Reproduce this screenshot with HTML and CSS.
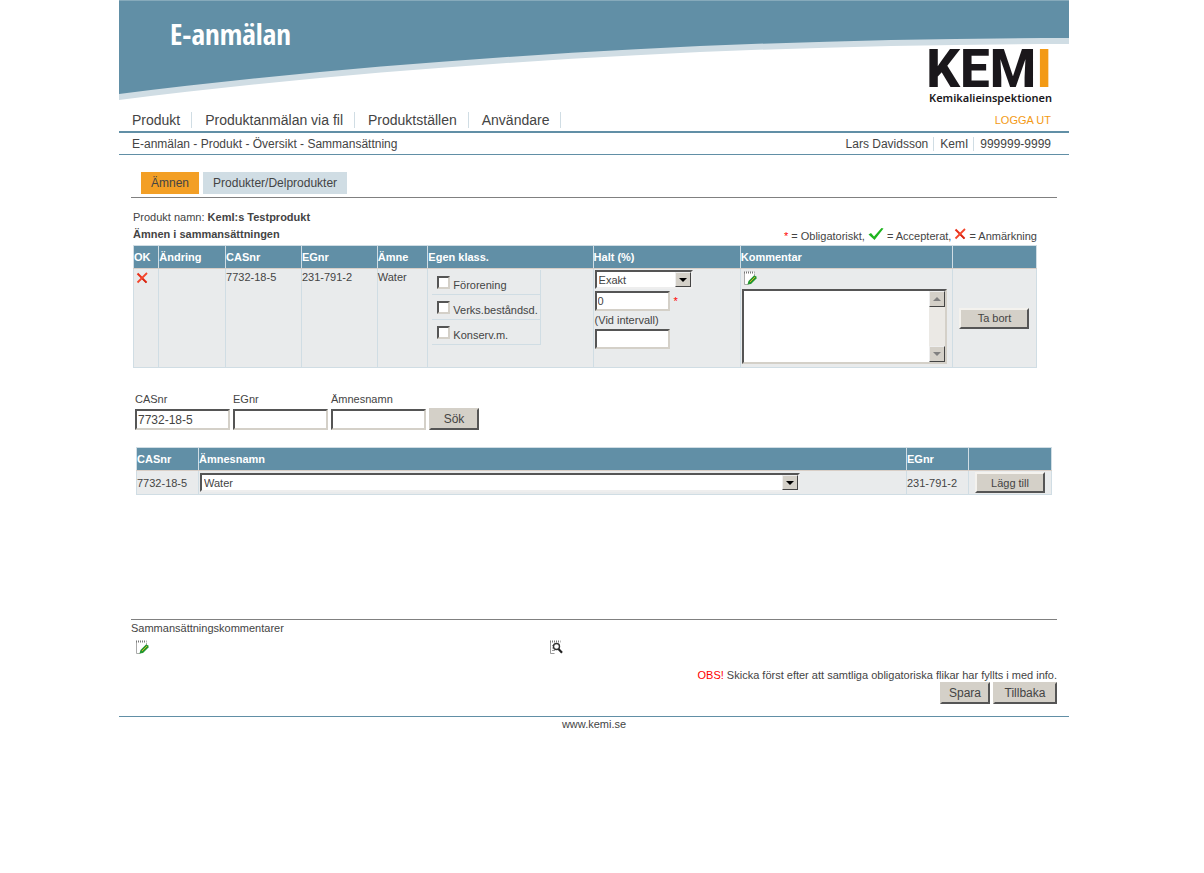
FILE: index.html
```html
<!DOCTYPE html>
<html lang="sv">
<head>
<meta charset="utf-8">
<title>E-anmälan</title>
<link rel="stylesheet" href="styles.css">
</head>
<body>
<svg class="defs" aria-hidden="true">
  <symbol id="cross" viewBox="0 0 12 12">
    <path d="M1.500 1.500 10.500 10.500" stroke="#e8301a" stroke-width="2"/>
    <path d="M11 1 1.500 10.500" stroke="#f4452a" stroke-width="1.800"/>
    <path d="M6.500 7 10.500 11" stroke="#c8200c" stroke-width="1"/>
  </symbol>
  <symbol id="note" viewBox="0 0 14 14">
    <path d="M1 1h10v7l-4 5H1Z" fill="#fff"/>
    <path d="M1.500 2v11.500h4M11.500 3v2" fill="none" stroke="#aaa"/>
    <path d="M1 1.500h10.500" stroke="#777" stroke-width="2" stroke-dasharray="1 1"/>
    <path d="M4.500 13.500 5.500 10 11 4.500 13.500 5.500 13.500 7.500 8 13Z" fill="#23972f"/>
    <path d="M7 11 12 6" stroke="#d9b41f" stroke-width="1"/>
  </symbol>
</svg>
<div class="page">
  <header class="banner">
    <svg class="wave" viewBox="0 0 950 105" preserveAspectRatio="none" aria-hidden="true">
      <path d="M0 0H950V44C640 44 300 62 0 100Z" fill="#d0dde4"/>
      <path d="M0 0H950V38C640 38 300 56 0 94Z" fill="#618fa6"/>
      <path d="M0 .5H950" stroke="#86aabb"/>
    </svg>
    <h1 class="title">E-anmälan</h1>
    <div class="logo"><span class="logo-mark">KEM<b>I</b></span><span class="logo-sub">Kemikalieinspektionen</span></div>
  </header>
  <nav class="nav">
    <a href="#">Produkt</a><a href="#">Produktanmälan via fil</a><a href="#">Produktställen</a><a href="#">Användare</a>
    <a class="logout" href="#">LOGGA UT</a>
  </nav>
  <div class="crumbs">
    <span class="path">E-anmälan - Produkt - Översikt - Sammansättning</span>
    <span>Lars Davidsson</span><span>KemI</span><span>999999-9999</span>
  </div>
  <main>
    <div class="tabs"><a class="tab active" href="#">Ämnen</a><a class="tab" href="#">Produkter/Delprodukter</a></div>
    <section class="substances">
      <p class="product">Produkt namn: <b>KemI:s Testprodukt</b></p>
      <div class="heading">
        <h2>Ämnen i sammansättningen</h2>
        <p class="legend"><span class="red">*</span> = Obligatoriskt,
          <svg class="mark" width="16" height="14" viewBox="0 0 16 14"><path d="M.5 7.500 3 6 6 9.500 13.500 1 15.500 1.500 6.500 13Z" fill="#1fb51f"/></svg> = Accepterat,
          <svg class="mark" width="12" height="12"><use href="#cross"/></svg> = Anmärkning</p>
      </div>
      <table class="grid main-grid">
        <colgroup><col class="c-ok"><col class="c-change"><col class="c-nr"><col class="c-nr"><col class="c-name"><col class="c-class"><col class="c-conc"><col class="c-comment"><col></colgroup>
        <thead><tr><th>OK</th><th>Ändring</th><th>CASnr</th><th>EGnr</th><th>Ämne</th><th>Egen klass.</th><th>Halt (%)</th><th>Kommentar</th><th></th></tr></thead>
        <tbody><tr>
          <td><svg class="status" width="12" height="12"><use href="#cross"/></svg></td>
          <td></td><td>7732-18-5</td><td>231-791-2</td><td>Water</td>
          <td><div class="checks">
            <label><input type="checkbox">Förorening</label>
            <label><input type="checkbox">Verks.beståndsd.</label>
            <label><input type="checkbox">Konserv.m.</label>
          </div></td>
          <td><div class="conc">
            <div class="select short"><select aria-label="Halt"><option>Exakt</option></select><span class="arrow"></span></div>
            <div class="value"><input class="field" type="text" value="0" aria-label="Halt i procent"><span class="red">*</span></div>
            <label for="interval">(Vid intervall)</label>
            <input class="field" id="interval" type="text">
          </div></td>
          <td><div class="comment">
            <svg width="14" height="14"><use href="#note"/></svg>
            <div class="area"><textarea aria-label="Kommentar"></textarea><div class="scroll"><span class="arrow up"></span><span class="arrow down"></span></div></div>
          </div></td>
          <td class="action"><button class="btn">Ta bort</button></td>
        </tr></tbody>
      </table>
    </section>
    <form class="search">
      <label>CASnr<input class="field" type="text" value="7732-18-5"></label>
      <label>EGnr<input class="field" type="text"></label>
      <label>Ämnesnamn<input class="field" type="text"></label>
      <button class="btn flat" type="button">Sök</button>
    </form>
    <table class="grid result-grid">
      <colgroup><col class="r-cas"><col><col class="r-eg"><col class="r-act"></colgroup>
      <thead><tr><th>CASnr</th><th>Ämnesnamn</th><th>EGnr</th><th></th></tr></thead>
      <tbody><tr><td>7732-18-5</td><td><div class="select long"><select aria-label="Ämnesnamn"><option>Water</option></select><span class="arrow"></span></div></td><td>231-791-2</td><td class="action"><button class="btn">Lägg till</button></td></tr></tbody>
    </table>
    <section class="notes">
      <h3>Sammansättningskommentarer</h3>
      <div class="note-icons">
        <svg width="14" height="14"><use href="#note"/></svg>
        <svg width="14" height="14" viewBox="0 0 14 14"><path d="M1.500 2v11.500h4M3 5.500h2M3 8h2M3 10.500h3" fill="none" stroke="#999"/><path d="M1 1.500h10.500" stroke="#777" stroke-width="2" stroke-dasharray="1 1"/><circle cx="7.500" cy="6.500" r="3" fill="#fff" stroke="#333" stroke-width="1.400"/><path d="M9.500 9 13 12.800" stroke="#222" stroke-width="2.200"/></svg>
      </div>
    </section>
    <div class="submit">
      <p><span class="obs">OBS!</span> Skicka först efter att samtliga obligatoriska flikar har fyllts i med info.</p>
      <div class="buttons"><button class="btn flat">Spara</button><button class="btn flat wide">Tillbaka</button></div>
    </div>
  </main>
  <footer>www.kemi.se</footer>
</div>
</body>
</html>
```
FILE: styles.css
```css
* { box-sizing: border-box; }
body { margin: 0; padding-right: 16px; background: #fff; color: #444; font: 11px/14px "Liberation Sans", Arial, sans-serif; }
a { color: inherit; text-decoration: none; }
h1, h2, h3, p { margin: 0; }
svg { display: block; }
.defs { position: absolute; width: 0; height: 0; }
.page { max-width: 950px; margin: 0 auto; }

.banner { position: relative; display: flex; justify-content: space-between; height: 108px; padding: 16px 17px 0 51px; }
.wave { position: absolute; inset: 0 0 auto 0; z-index: -1; width: 100%; height: 105px; }
.title { color: #fff; font: bold 29px/36px "Liberation Sans Narrow", "Open Sans Condensed", "Liberation Sans", sans-serif; }
.logo { display: flex; flex-direction: column; align-items: flex-end; padding-top: 33px; color: #1a171b; }
.logo-mark { font: 800 53px/41px Roboto, sans-serif; }
.logo-mark b { color: #f39a15; font-weight: inherit; }
.logo-sub { font: 600 11px/16px "Noto Sans", sans-serif; }

.nav { display: flex; align-items: center; height: 25px; padding-right: 18px; border-bottom: 2px solid #618fa6; font-size: 14px; line-height: 16px; }
.nav a { padding: 0 11px 0 13px; border-right: 1px solid #d0dde4; }
.nav .logout { margin-left: auto; padding: 0; border: 0; color: #f39a15; font-size: 11px; }
.crumbs { display: flex; align-items: center; height: 22px; padding: 0 18px 0 13px; border-bottom: 1px solid #618fa6; font-size: 12px; }
.crumbs .path { margin-right: auto; }
.crumbs span + span { padding-left: 6px; }
.crumbs span + span:not(:last-child) { padding-right: 5px; border-right: 1px solid #d0dde4; }

main { padding: 17px 12px 0; }
.tabs { display: flex; gap: 4px; padding: 0 10px 3px; border-bottom: 1px solid #808080; font-size: 12px; }
.tab { padding: 4px 10px; background: #d0dde4; }
.tab.active { background: #f39f25; }
.substances { padding: 12px 20px 0 2px; }
.heading { display: flex; justify-content: space-between; align-items: flex-end; height: 21px; }
h2 { padding-bottom: 4px; font-size: 11px; line-height: 14px; }
.legend { display: flex; align-items: center; gap: 3px; height: 18px; }
.mark { margin-bottom: 5px; }
.red, .obs { color: #f00; }

.grid { width: 100%; border-collapse: collapse; table-layout: fixed; }
.grid th, .grid td { padding: 1px; border: 1px solid #d0dde4; text-align: left; vertical-align: top; }
.grid th { height: 23px; padding-left: 0; background: #618fa6; border-bottom-color: #d8cec6; color: #fff; font-weight: bold; vertical-align: middle; white-space: nowrap; }
.grid td { background: #e9ebec; }
.grid td:not(.action) { padding-left: 0; }
.grid td.action { vertical-align: middle; text-align: center; }
.c-ok { width: 2.8%; } .c-change { width: 7.4%; } .c-nr { width: 8.4%; } .c-name { width: 5.6%; }
.c-class { width: 18.3%; } .c-conc { width: 16.3%; } .c-comment { width: 23.5%; }
.main-grid tbody tr { height: 99px; }
.status { margin: 2px; }

.checks { display: flex; flex-direction: column; width: 113px; padding-left: 4px; }
.checks label { display: flex; align-items: center; height: 25px; padding: 5px 0 0 5px; border: solid #d0dde4; border-width: 0 1px 1px 0; white-space: nowrap; }
input[type="checkbox"] { appearance: none; width: 13px; height: 13px; margin: 0 3px 4px 0; background: #fff; border: 2px solid; border-color: #555 #d4d0c8 #d4d0c8 #555; }
.field { width: 75px; height: 20px; padding: 0 1px; color: #444; background: #fff; border: 2px solid; border-color: #555 #d4d0c8 #d4d0c8 #555; border-radius: 0; font: inherit; }
.conc { display: flex; flex-direction: column; align-items: flex-start; gap: 2px; padding-left: 1px; }
.conc label { height: 14px; }
.value { display: flex; align-items: center; gap: 4px; }
.select { display: flex; height: 19px; background: #fff; border: 2px solid; border-color: #555 #eee #eee #555; }
.select select { flex: 1; min-width: 0; padding: 0 2px; appearance: none; color: #444; background: #fff; border: 0; border-radius: 0; font: inherit; }
.short { width: 98px; }
.long { width: 85%; margin-left: 1px; }
.arrow { display: flex; align-items: center; justify-content: center; width: 16px; background: #d4d0c8; border: 1px solid; border-color: #eee #444 #444 #eee; }
.arrow::before { content: ""; border: solid transparent; border-width: 4px 4px 0; border-top-color: #000; }
.comment { padding-left: 1px; }
.comment > svg { margin: 1px; }
.area { display: flex; width: 205px; height: 75px; margin-top: 4px; background: #fff; border: 2px solid; border-color: #555 #d4d0c8 #d4d0c8 #555; }
.area textarea { flex: 1; min-width: 0; padding: 1px; border: 0; resize: none; font: inherit; }
.scroll { display: flex; flex-direction: column; justify-content: space-between; width: 16px; background: #ebe9e5; }
.scroll .arrow { height: 16px; }
.scroll .arrow::before { border-top-color: #808080; }
.scroll .up::before { border-width: 0 4px 4px; border-bottom-color: #808080; }

.btn { width: 70px; height: 21px; padding: 0; color: #444; background: #d4d0c8; border: 2px solid; border-color: #f4f2ee #555 #555 #f4f2ee; border-radius: 0; font: inherit; }
.btn.flat { width: 50px; height: 22px; border-color: #d4d0c8 #555 #555 #d4d0c8; font-size: 12px; }
.btn.wide { width: 64px; }
.search { display: flex; align-items: flex-end; gap: 3px; padding: 24px 4px 0; }
.search label { display: flex; flex-direction: column; gap: 3px; }
.search .field { width: 95px; height: 21px; font-size: 12px; }
.result-grid { width: calc(100% - 10px); margin: 17px 5px 0; }
.result-grid td { height: 24px; vertical-align: middle; }
.r-cas { width: 62px; } .r-eg { width: 62px; } .r-act { width: 83px; }

.notes { margin-top: 124px; border-top: 1px solid #808080; }
h3 { font-size: 11px; font-weight: normal; line-height: 16px; }
.note-icons { display: grid; grid-template-columns: 414px 1fr; padding: 4px; }
.submit { display: flex; flex-direction: column; align-items: flex-end; padding: 10px 0 12px; }
.buttons { display: flex; gap: 3px; }
footer { border-top: 1px solid #618fa6; text-align: center; }
```
